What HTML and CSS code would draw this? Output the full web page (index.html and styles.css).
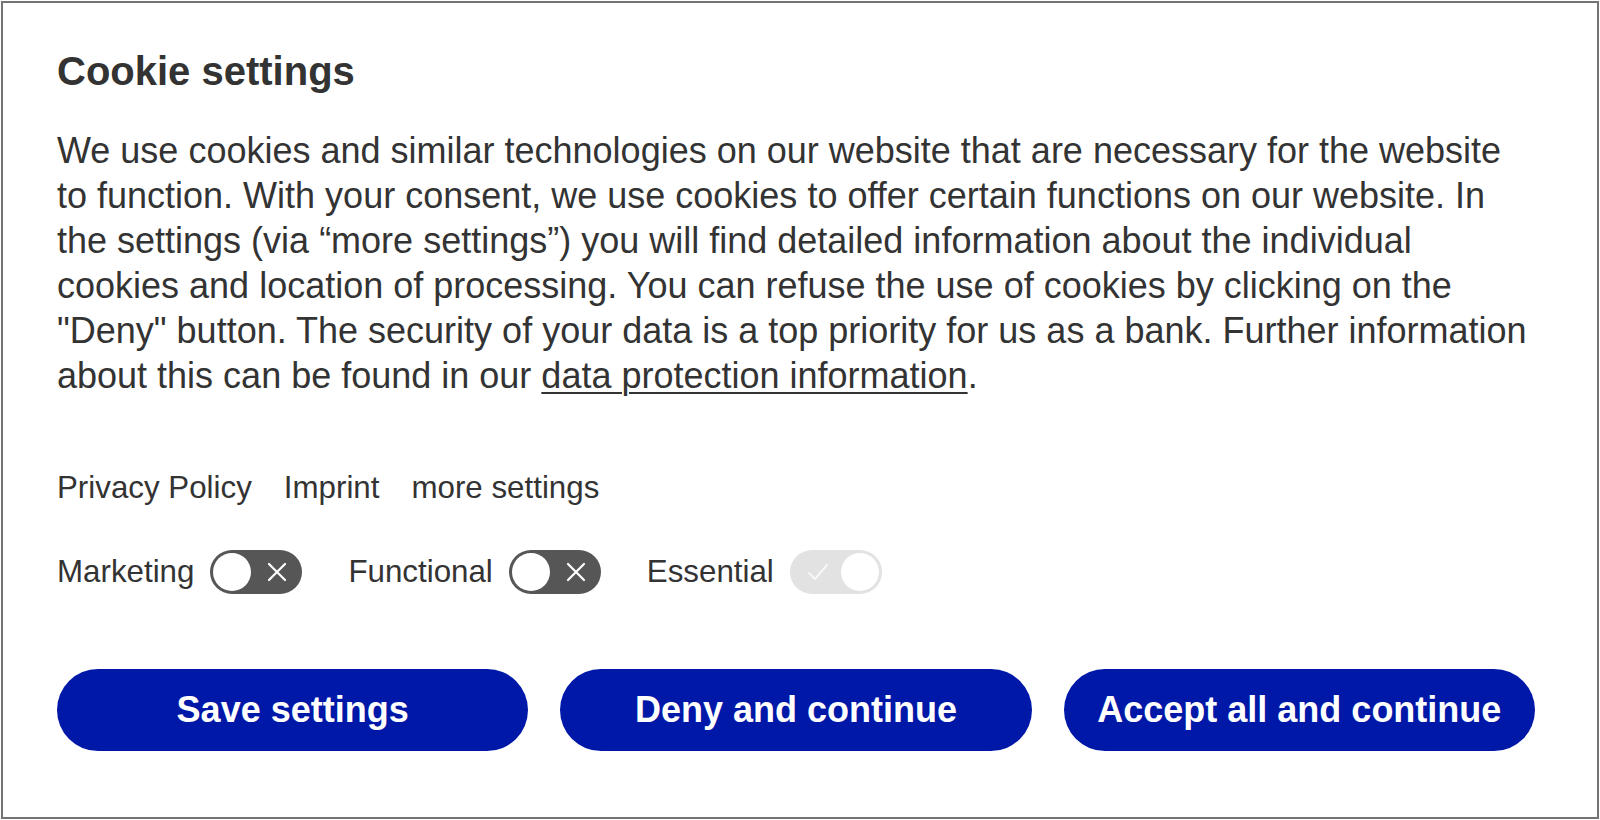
FILE: index.html
```html
<!DOCTYPE html>
<html lang="en">
<head>
<meta charset="utf-8">
<title>Cookie settings</title>
<link rel="stylesheet" href="styles.css">
</head>
<body>
<div class="dialog">
  <h1 class="title">Cookie settings</h1>
  <p class="intro">We use cookies and similar technologies on our website that are necessary for the website to function. With your consent, we use cookies to offer certain functions on our website. In the settings (via “more settings”) you will find detailed information about the individual cookies and location of processing. You can refuse the use of cookies by clicking on the "Deny" button. The security of your data is a top priority for us as a bank. Further information about this can be found in our <a class="inline-link" href="#">data protection information</a>.</p>
  <nav class="links">
    <a class="link" href="#">Privacy Policy</a>
    <a class="link" href="#">Imprint</a>
    <a class="link" href="#">more settings</a>
  </nav>
  <div class="toggles">
    <label class="toggle-item">
      <span class="toggle-label">Marketing</span>
      <span class="switch off">
        <span class="knob"></span>
        <svg class="icon-x" viewBox="0 0 20 20" width="20" height="20"><path d="M2 2 L18 18 M18 2 L2 18" stroke="#fff" stroke-width="2.2" stroke-linecap="round" fill="none"/></svg>
      </span>
    </label>
    <label class="toggle-item">
      <span class="toggle-label">Functional</span>
      <span class="switch off">
        <span class="knob"></span>
        <svg class="icon-x" viewBox="0 0 20 20" width="20" height="20"><path d="M2 2 L18 18 M18 2 L2 18" stroke="#fff" stroke-width="2.2" stroke-linecap="round" fill="none"/></svg>
      </span>
    </label>
    <label class="toggle-item">
      <span class="toggle-label">Essential</span>
      <span class="switch on-disabled">
        <svg class="icon-check" viewBox="0 0 22 18" width="22" height="18"><path d="M2 10 L8 16 L20 2" stroke="#f7f7f7" stroke-width="2" stroke-linecap="round" stroke-linejoin="round" fill="none"/></svg>
        <span class="knob"></span>
      </span>
    </label>
  </div>
  <div class="actions">
    <button class="btn" type="button">Save settings</button>
    <button class="btn" type="button">Deny and continue</button>
    <button class="btn" type="button">Accept all and continue</button>
  </div>
</div>
</body>
</html>
```
FILE: styles.css
```css
html, body {
  margin: 0;
  padding: 0;
  background: #fff;
}
body {
  padding: 1px;
  font-family: "Liberation Sans", Arial, Helvetica, sans-serif;
  color: #333;
}
.dialog {
  box-sizing: border-box;
  width: 1598px;
  height: 818px;
  border: 2px solid #737373;
  padding: 47px 62px 0 54px;
}
.title {
  margin: 0;
  font-size: 40px;
  line-height: 43px;
  font-weight: bold;
  color: #333;
}
.intro {
  margin: 35px 0 0;
  font-size: 36px;
  line-height: 45px;
}
.inline-link {
  color: #333;
  text-decoration: underline;
  text-decoration-thickness: 2px;
  text-underline-offset: 4px;
}
.links {
  display: flex;
  gap: 32px;
  margin-top: 67px;
  font-size: 31.3px;
  line-height: 45px;
}
.link {
  color: #333;
  text-decoration: none;
}
.toggles {
  display: flex;
  align-items: center;
  gap: 46px;
  margin-top: 39px;
  font-size: 31.3px;
  line-height: 45px;
}
.toggle-item {
  display: flex;
  align-items: center;
  gap: 16px;
}
.switch {
  box-sizing: border-box;
  width: 92px;
  height: 44px;
  border-radius: 22px;
  display: flex;
  align-items: center;
  padding: 0 3px;
}
.switch.off {
  background: #565656;
}
.switch.on-disabled {
  background: #e2e2e2;
  justify-content: space-between;
  padding: 0 3px 0 17px;
}
.knob {
  width: 38px;
  height: 38px;
  border-radius: 50%;
  background: #fff;
  flex: none;
}
.icon-x {
  margin-left: 16px;
  width: 20px;
  height: 20px;
}
.icon-check {
  width: 22px;
  height: 18px;
}
.actions {
  display: flex;
  gap: 32px;
  margin-top: 75px;
}
.btn {
  flex: 1;
  height: 82px;
  border: none;
  border-radius: 41px;
  background: #0018a8;
  color: #fff;
  font-family: "Liberation Sans", Arial, Helvetica, sans-serif;
  font-size: 36px;
  font-weight: bold;
  padding: 0;
  cursor: pointer;
}
```
